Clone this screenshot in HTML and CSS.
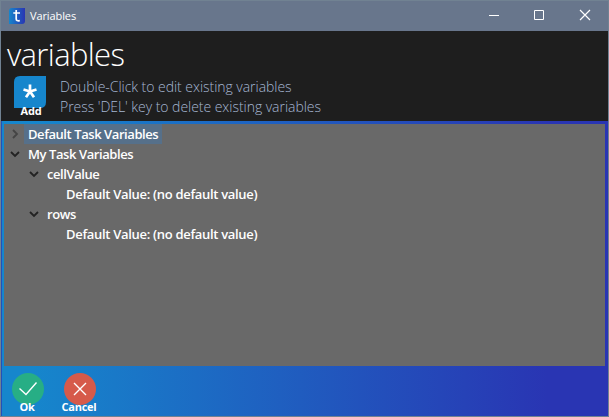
FILE: index.html
```html
<!DOCTYPE html>
<html lang="en">
<head>
<meta charset="utf-8">
<title>Variables</title>
<link rel="stylesheet" href="styles.css">
</head>
<body>
<main class="window">
  <header class="titlebar">
    <svg class="app-icon" width="16" height="16" viewBox="0 0 16 16"><defs><linearGradient id="brand"><stop stop-color="#1686cc"/><stop offset="1" stop-color="#2935b3"/></linearGradient></defs><path d="M3 0H16V13Q16 16 13 16H0V3Q0 0 3 0Z" fill="url(#brand)"/><path d="M7.2 2V11Q7.2 13.2 10.8 12.7M4.3 5H11" fill="none" stroke="#fff" stroke-width="1.7"/></svg>
    <span class="caption">Variables</span>
    <div class="controls">
      <svg width="46" height="30" viewBox="0 0 46 30"><path d="M18 14.5H28" stroke="#fff"/></svg>
      <svg width="46" height="30" viewBox="0 0 46 30"><path d="M17.5 9.5H26.5V18.5H17.5Z" fill="none" stroke="#fff"/></svg>
      <svg width="46" height="30" viewBox="0 0 46 30"><path d="M17 9L27 19M27 9L17 19" stroke="#fff" stroke-width="1.2"/></svg>
    </div>
  </header>
  <section class="intro">
    <h1>variables</h1>
    <div class="intro-row">
      <button class="action add">
        <svg width="32" height="32" viewBox="0 0 32 32"><path d="M6 0H32V26Q32 32 26 32H0V6Q0 0 6 0Z" fill="#1686cc"/><path d="M16 15.5V8.5M16 15.5L9.5 13.5M16 15.5L22.5 13.5M16 15.5L12 21.3M16 15.5L20 21.3" stroke="#fff" stroke-width="2.7"/></svg>
        <span>Add</span>
      </button>
      <div class="hints"><p>Double-Click to edit existing variables</p><p>Press 'DEL' key to delete existing variables</p></div>
    </div>
  </section>
  <section class="body">
    <div class="tree">
      <div class="node group"><svg class="arrow closed" width="10" height="10" viewBox="0 0 10 10"><path d="M3 1L7 5L3 9"/></svg><span class="label selected">Default Task Variables</span></div>
      <div class="node"><svg class="arrow" width="10" height="10" viewBox="0 0 10 10"><path d="M1 3L5 7L9 3"/></svg><span class="label">My Task Variables</span></div>
      <div class="node child"><svg class="arrow" width="10" height="10" viewBox="0 0 10 10"><path d="M1 3L5 7L9 3"/></svg><span class="label">cellValue</span></div>
      <div class="node leaf"><span class="label">Default Value: (no default value)</span></div>
      <div class="node child"><svg class="arrow" width="10" height="10" viewBox="0 0 10 10"><path d="M1 3L5 7L9 3"/></svg><span class="label">rows</span></div>
      <div class="node leaf"><span class="label">Default Value: (no default value)</span></div>
    </div>
    <footer class="actions">
      <button class="action"><svg width="32" height="32" viewBox="0 0 32 32"><circle cx="16" cy="16" r="16" fill="#27ae85"/><path d="M7.5 15.5L14 21.5L24.5 9.5" fill="none" stroke="#fff" stroke-width="1.4"/></svg><span>Ok</span></button>
      <button class="action"><svg width="32" height="32" viewBox="0 0 32 32"><circle cx="16" cy="16" r="16" fill="#d65a4a"/><path d="M10 10L22 22M22 10L10 22" stroke="#fff" stroke-width="1.4"/></svg><span>Cancel</span></button>
    </footer>
  </section>
</main>
</body>
</html>
```
FILE: styles.css
```css
* { box-sizing: border-box; }
body { margin: 0; font-family: "Open Sans", "Noto Sans", sans-serif; color: #fff; }
.window { width: 609px; height: 417px; display: flex; flex-direction: column; border: 1px solid #718292; background: #68768c; overflow: hidden; }
.titlebar { height: 30px; flex: none; display: flex; align-items: center; padding-left: 8px; font-size: 11px; }
.app-icon { margin-top: -1px; }
.caption { margin: -2px 0 0 5px; letter-spacing: -.1px; }
.controls { display: flex; margin-left: auto; margin-right: -1px; }
.intro { height: 90px; flex: none; background: #1e1e1e; padding-left: 6px; }
h1 { margin: 0; height: 45px; font-size: 31px; line-height: 46px; font-weight: 300; letter-spacing: -.65px; }
.intro-row { display: flex; padding-left: 7px; }
.action { width: 32px; height: 41px; padding: 0; border: 0; background: none; color: #fff; font: 700 11px/13px "Open Sans", sans-serif; letter-spacing: -.25px; display: flex; flex-direction: column; align-items: center; flex: none; }
.action svg { display: block; flex: none; }
.action span { margin: -5px 2px 0 0; white-space: nowrap; }
.add span { margin: -4px 0 0 2px; }
.hints { margin: 1px 0 0 14px; color: #a6b7d3; font-size: 14px; font-weight: 300; line-height: 20px; letter-spacing: -.04px; }
.hints p { margin: 0; }
.body { flex: 1; min-height: 0; border-left: 1px solid #2450b8; background: linear-gradient(90deg, #1686cc 0%, #1686cc 5%, #2935b3 90%); padding: 3px 3px 0 2px; }
.tree { height: 242px; background: #696969; font-size: 13px; font-weight: 600; line-height: 20px; letter-spacing: -.31px; }
.node { height: 20px; display: flex; align-items: center; padding-left: 6px; }
.group { letter-spacing: -.43px; }
.child { padding-left: 25px; }
.child .label { letter-spacing: -.5px; }
.leaf { padding-left: 58px; }
.arrow { fill: none; stroke: #222; stroke-width: 1.8; }
.closed { stroke: #444; }
.label { padding: 0 4px; margin-left: 4px; white-space: nowrap; }
.leaf .label { margin-left: 0; }
.selected { background: #56708a; }
.child .label, .group + .node .label { letter-spacing: -.42px; }
.actions { display: flex; gap: 20px; padding: 7px 0 0 8px; }
```
